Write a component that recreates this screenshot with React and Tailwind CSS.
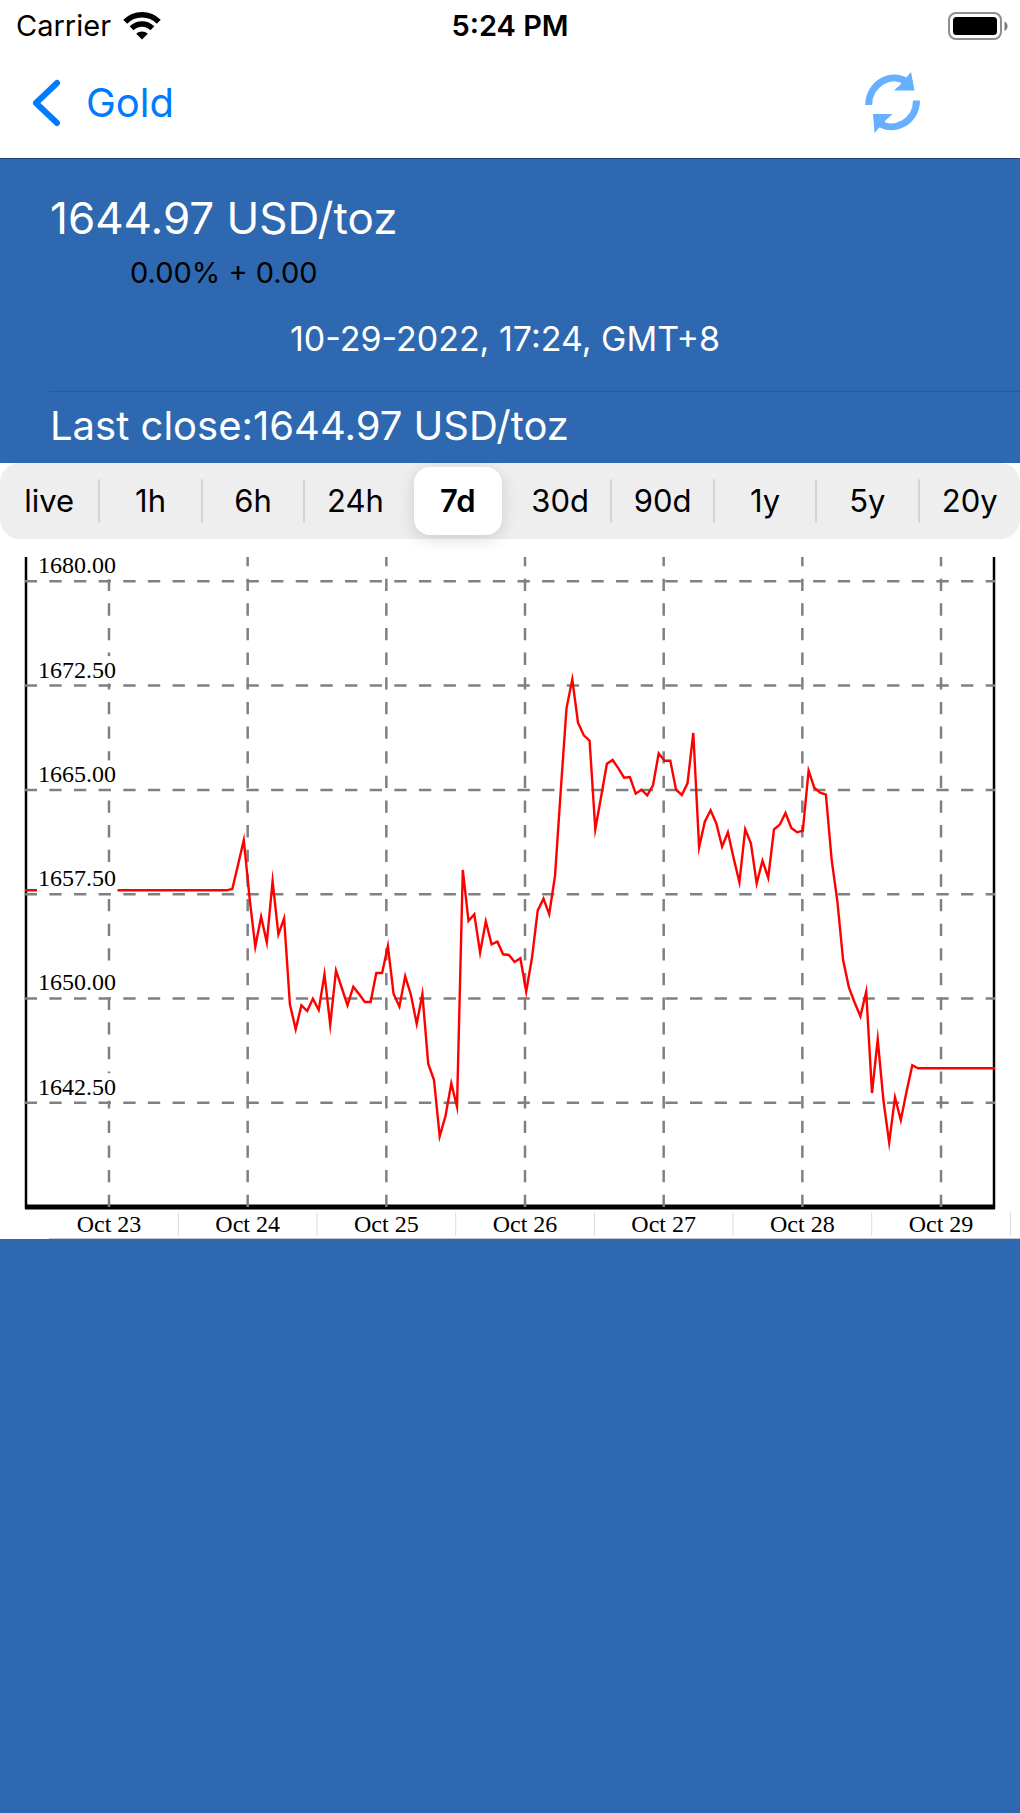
import { useState } from "react";

const RANGES = ["live", "1h", "6h", "24h", "7d", "30d", "90d", "1y", "5y", "20y"];

const PRICE_LINES = [
  { label: "1680.00", y: 41.3 },
  { label: "1672.50", y: 145.6 },
  { label: "1665.00", y: 249.9 },
  { label: "1657.50", y: 354.2 },
  { label: "1650.00", y: 458.4 },
  { label: "1642.50", y: 562.7 },
];

const DAYS = ["Oct 23", "Oct 24", "Oct 25", "Oct 26", "Oct 27", "Oct 28", "Oct 29"];
const DAY_START = 109;
const DAY_WIDTH = 138.67;

/* Hourly samples, as heights on the chart, from the first move of the week. */
const SAMPLE_START = 226.5;
const SAMPLE_STEP = 5.763;
const SAMPLES = [
  350.3, 349, 325, 300, 358.3, 406.7, 376.7, 402.3, 341, 394.3, 378.3, 464.3, 489.3, 465.3, 471,
  458.7, 470, 434.3, 484.7, 430.7, 448, 465.3, 446.7, 454, 462, 462, 433, 433, 406, 454, 466.7,
  436.3, 454.7, 483.7, 454, 523.7, 540, 596.3, 576, 543.3, 566.7, 330, 381, 374.3, 412.7, 381.3,
  404.3, 401.7, 414.3, 415, 422, 418.3, 451.7, 418.3, 370.7, 358.7, 374.3, 336, 250, 168.3, 139.3,
  182.7, 195.3, 200.7, 289.3, 256.7, 223.7, 220, 228.3, 237.7, 237, 253.7, 249.7, 255.3, 245.3,
  213.3, 220.7, 220.7, 249.7, 255, 243.3, 193, 307.3, 281.7, 270.3, 283.7, 306.7, 292.3, 318,
  342.3, 289.3, 303.3, 343.3, 320.7, 337.7, 289.3, 284.7, 273, 288, 292.3, 290.7, 230.7, 247.7,
  252.7, 254.7, 319.3, 361.7, 420, 447.3, 462.7, 476.3, 451.7, 553, 499.3, 561, 602.7, 557.3, 580,
  551.7, 525.3, 528.3,
];

const linePoints = [
  "25,350.3",
  ...SAMPLES.map((y, i) => `${(SAMPLE_START + i * SAMPLE_STEP).toFixed(1)},${y}`),
  "995,528.3",
].join(" ");

function WifiIcon() {
  return (
    <svg viewBox="0 0 38 28" className="h-7 w-[38px]" aria-hidden="true">
      <g fill="none" stroke="#000" strokeWidth="5.5">
        <path d="M2.2 9.8a23.6 23.6 0 0 1 33.6 0" />
        <path d="M8.6 16.2a14.7 14.7 0 0 1 20.8 0" />
      </g>
      <path d="M19 27.5l-5.8-5.8a8.4 8.4 0 0 1 11.6 0z" fill="#000" />
    </svg>
  );
}

function BatteryIcon() {
  return (
    <svg viewBox="0 0 60 28" className="h-7 w-[60px]" role="img" aria-label="Battery full">
      <rect x="1" y="1" width="52" height="26" rx="7" fill="none" stroke="#8e8e8e" strokeWidth="2" />
      <rect x="5" y="5" width="44" height="18" rx="3.5" fill="#000" />
      <path d="M56.5 9.5c4 1.5 4 8 0 9.5z" fill="#7a7a7a" />
    </svg>
  );
}

function RefreshIcon() {
  return (
    <svg viewBox="0 0 56 62" className="h-[62px] w-14" aria-hidden="true">
      <g fill="none" stroke="#66b0ff" strokeWidth="7">
        <path d="M3.7 33C3.7 12 26 -1 42 10" />
        <path d="M51.5 28.5C51.5 50 29 61 14 51" />
      </g>
      <path d="M46 0L49.5 18.5H29L35 13z" fill="#66b0ff" />
      <path d="M8 42H27.5L21 48L9.5 61z" fill="#66b0ff" />
    </svg>
  );
}

function PriceChart() {
  return (
    <svg
      viewBox="0 0 1020 699"
      className="block h-auto w-full"
      role="img"
      aria-label="Gold price, last 7 days"
    >
      <g stroke="#000">
        <path d="M26 17V669" strokeWidth="2.5" />
        <path d="M994 17V669" strokeWidth="2.5" />
        <path d="M25 667H995" strokeWidth="5" />
      </g>
      <g stroke="#808080" strokeWidth="2.5" strokeDasharray="12.32 12.32">
        {PRICE_LINES.map((line) => (
          <path key={line.label} d={`M24.7 ${line.y}H995`} />
        ))}
        {DAYS.map((day, i) => (
          <path key={day} d={`M${DAY_START + i * DAY_WIDTH} 667V17`} />
        ))}
      </g>
      <polyline
        points={linePoints}
        fill="none"
        stroke="#f00"
        strokeWidth="2.4"
        strokeMiterlimit="11"
      />
      <g fontFamily="'Liberation Serif', serif" fontSize="24">
        {PRICE_LINES.map((line) => (
          <g key={line.label}>
            <rect x="37" y={line.y - 29.5} width="80.5" height="27.5" fill="#fff" />
            <text x="38" y={line.y - 8}>
              {line.label}
            </text>
          </g>
        ))}
        {DAYS.map((day, i) => (
          <g key={day}>
            <text x={DAY_START + i * DAY_WIDTH} y="692" textAnchor="middle">
              {day}
            </text>
            <path
              d={`M${DAY_START + (i + 0.5) * DAY_WIDTH} 672V696`}
              stroke="#dcdcdc"
              strokeWidth="1"
            />
          </g>
        ))}
      </g>
      <path d="M49 698.5H1020" stroke="#c4c6ca" strokeWidth="1" />
    </svg>
  );
}

export default function App() {
  const [range, setRange] = useState("7d");

  return (
    <div className="flex min-h-screen flex-col bg-[#2e68b1] font-['Inter',sans-serif] text-black">
      <header className="border-b border-[#1d4379] bg-white">
        <div className="grid h-[52px] grid-cols-3 items-center px-3">
          <div className="flex items-center gap-3 pl-1 text-[29px] leading-8">
            <span>Carrier</span>
            <WifiIcon />
          </div>
          <div className="text-center text-[29px] leading-8 font-semibold">5:24 PM</div>
          <div className="flex justify-end">
            <BatteryIcon />
          </div>
        </div>
        <nav className="flex h-[106px] items-center justify-between pr-[99px] pb-1 pl-8">
          <button type="button" className="flex items-center gap-6 text-[40px] leading-12 text-[#007aff]">
            <svg viewBox="0 0 30 48" className="h-12 w-[30px]" aria-hidden="true">
              <path
                d="M25 4L4 24L25 44"
                fill="none"
                stroke="#007aff"
                strokeWidth="6"
                strokeLinecap="round"
                strokeLinejoin="round"
              />
            </svg>
            <span>Gold</span>
          </button>
          <button type="button" aria-label="Refresh">
            <RefreshIcon />
          </button>
        </nav>
      </header>

      <main>
        <section className="pl-[49px] text-white">
          <div className="flex flex-col items-start border-b border-[#2b5a9a] pt-[31px] pb-[30px] pl-px">
            <h1 className="text-[44px] leading-[56px]">1644.97 USD/toz</h1>
            <p className="pl-20 text-[29px] leading-[54px] text-black">0.00% + 0.00</p>
            <p className="self-center pt-4 pr-[60px] text-[34px] leading-[45px]">
              10-29-2022, 17:24, GMT+8
            </p>
          </div>
          <p className="pt-2 pb-3 pl-px text-[40px] leading-[51px]">Last close:1644.97 USD/toz</p>
        </section>

        <div className="bg-white">
          <div
            role="group"
            aria-label="Chart range"
            className="grid h-[76px] grid-cols-[98fr_repeat(9,102fr)] rounded-[20px] bg-[#eeeeee]"
          >
            {RANGES.map((item, i) => {
              const selected = item === range;
              const divided = i > 0 && !selected && RANGES[i - 1] !== range;
              return (
                <div key={item} className="flex items-center">
                  {i > 0 && (
                    <span className={divided ? "h-11 w-0.5 rounded bg-[#d3d4d8]" : "h-11 w-0.5"} />
                  )}
                  <button
                    type="button"
                    aria-pressed={selected}
                    onClick={() => setRange(item)}
                    className={
                      selected
                        ? "mx-1.5 h-[68px] flex-1 rounded-2xl bg-white text-[31px] font-semibold shadow-[0_4px_16px_rgba(0,0,0,0.14)]"
                        : "h-[68px] flex-1 text-[31px]"
                    }
                  >
                    {item}
                  </button>
                </div>
              );
            })}
          </div>
          <div className="pt-px">
            <PriceChart />
          </div>
        </div>
      </main>
    </div>
  );
}
